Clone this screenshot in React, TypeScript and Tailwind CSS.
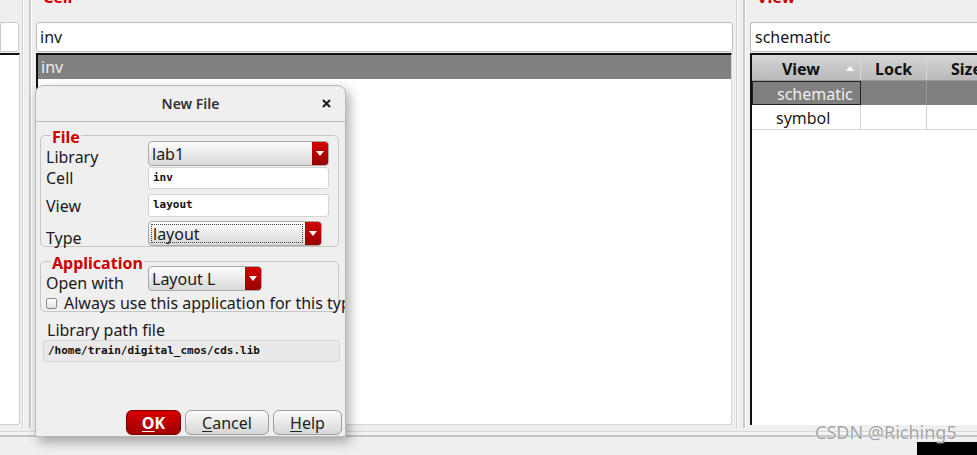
import React from 'react';

const Arrow = () => (
  <svg width="8" height="5" viewBox="0 0 8 5">
    <path d="M0 0h8L4 5z" fill="#fff" />
  </svg>
);

interface ComboProps {
  value: string;
  w: string;
  focus?: boolean;
}

const Combo: React.FC<ComboProps> = ({ value, w, focus }) => (
  <div className={`${w} h-[25px] flex rounded-[4px] border border-[#a9a9a9] bg-linear-to-b from-[#fdfdfd] to-[#d8d8d8] overflow-hidden`}>
    <div className="flex-1 flex items-center p-[2px]">
      <div className={`h-full w-full flex items-center pl-[1px] text-[16px] text-[#1a1a1a] ${focus ? 'border border-dotted border-[#444]' : ''}`}>
        {value}
      </div>
    </div>
    <div className="w-[16px] h-full bg-linear-to-b from-[#d40000] to-[#980000] flex items-center justify-center">
      <Arrow />
    </div>
  </div>
);

const Field = ({ value, h }: { value: string; h: string }) => (
  <div className={`${h} w-[181px] bg-white border border-[#d4d4d4] rounded-[3px] flex items-center pl-[4px] font-['DejaVu_Sans_Mono',monospace] font-bold text-[11px] text-[#111]`}>
    {value}
  </div>
);

const Splitter = () => (
  <div className="w-[15px] shrink-0 h-[428px] flex pl-[2px] gap-[5px]">
    <div className="w-[2px] h-full bg-[#cfcfcf] border-r border-white" />
    <div className="w-[3px] h-full bg-[#cbcbcb] border-r border-white" />
  </div>
);

const Legend = ({ text, mb }: { text: string; mb: string }) => (
  <div className={`-mt-[8px] ${mb} ml-[5px] h-[18px] w-fit px-[1px] bg-[#efefef] text-[16px] leading-[18px] font-bold text-[#cc0000]`}>
    {text}
  </div>
);

const Button = ({ first, rest, w, primary }: { first: string; rest: string; w: string; primary?: boolean }) => (
  <div
    className={`${w} h-[25px] rounded-[6px] flex items-center justify-center text-[16px] ${
      primary
        ? 'bg-linear-to-b from-[#d80000] to-[#a00000] border border-[#7a0000] text-white font-bold'
        : 'bg-linear-to-b from-[#fbfbfb] to-[#d6d6d6] border border-[#9c9c9c] text-[#222]'
    }`}
  >
    <span className="underline underline-offset-2">{first}</span>
    {rest}
  </div>
);

export default function App() {
  return (
    <div className="w-[977px] h-[455px] relative overflow-hidden bg-[#efefef] font-['Noto_Sans',sans-serif] text-[#1a1a1a]">
      <div className="flex h-[425px]">
        {/* library panel (mostly hidden) */}
        <div className="w-[20px] shrink-0 flex flex-col">
          <div className="h-[22px]" />
          <div className="h-[30px] w-[19px] bg-white border border-[#c8c8c8] rounded-r-[3px]" />
          <div className="mt-[1px] flex-1 bg-white border-t-2 border-t-[#111] border-r border-b border-[#d0d0d0] rounded-br-[3px]" />
        </div>
        <Splitter />
        {/* cell panel */}
        <div className="w-[699px] shrink-0 flex flex-col">
          <div className="h-[22px] pl-[8px]">
            <div className="-mt-[11px] text-[16px] leading-[16px] font-bold text-[#cc0000]">Cell</div>
          </div>
          <div className="h-[30px] mx-[1px] bg-white border border-[#bdbdbd] rounded-[3px] flex items-center pl-[3px] text-[16px]">inv</div>
          <div className="mt-[1px] ml-[1px] mr-[2px] flex-1 bg-white border-t-2 border-l-2 border-t-[#111] border-l-[#111] border-r border-b border-r-[#d6d6d6] border-b-[#d6d6d6] rounded-br-[3px]">
            <div className="h-[24px] bg-[#808080] flex items-center pl-[3px] text-[16px] text-[#eeeeee]">inv</div>
          </div>
        </div>
        <Splitter />
        {/* view panel */}
        <div className="flex-1 min-w-0 overflow-hidden flex flex-col">
          <div className="h-[22px] pl-[8px]">
            <div className="-mt-[11px] text-[16px] leading-[16px] font-bold text-[#cc0000]">View</div>
          </div>
          <div className="h-[30px] ml-[1px] bg-white border border-[#bdbdbd] border-r-0 rounded-l-[3px] flex items-center pl-[4px] text-[16px]">schematic</div>
          <div className="mt-[1px] ml-[1px] flex-1 bg-white border-t-2 border-l-2 border-[#111]">
            <div className="h-[26px] pt-[2px] flex bg-linear-to-b from-[#d6d6d6] to-[#b9b9b9] text-[16px] font-bold text-[#111] border-b border-[#9a9a9a]">
              <div className="w-[109px] shrink-0 flex items-center justify-center relative border-r border-[#d8d8d8]">
                <span className="pr-[10px]">View</span>
                <svg className="absolute right-[6px] top-[9px]" width="8" height="5" viewBox="0 0 8 5">
                  <path d="M4 0L8 5H0z" fill="#fff" />
                </svg>
              </div>
              <div className="w-[66px] shrink-0 flex items-center justify-center border-r border-[#d8d8d8]">Lock</div>
              <div className="flex-1 flex items-center pl-[24px] whitespace-nowrap">Size</div>
            </div>
            <div className="h-[24px] flex bg-[#808080] text-[16px] text-[#eeeeee]">
              <div className="w-[109px] shrink-0 flex items-center pl-[24px] pt-[1px] border border-[#222]">schematic</div>
              <div className="w-[66px] shrink-0 border-r border-[#9a9a9a]" />
              <div className="flex-1" />
            </div>
            <div className="h-[25px] flex text-[16px] border-b border-[#d2d2d2]">
              <div className="w-[109px] shrink-0 flex items-center pl-[24px] pt-[2px] border-r border-[#d2d2d2]">symbol</div>
              <div className="w-[66px] shrink-0 border-r border-[#d2d2d2]" />
              <div className="flex-1" />
            </div>
          </div>
        </div>
      </div>

      {/* bottom area */}
      <div className="h-[30px] flex flex-col">
        <div className="h-[6px]" />
        <div className="h-[1px] bg-[#d8d8d8]" />
        <div className="h-[3px] bg-[#f4f4f4]" />
        <div className="h-[2px] bg-[#c4c4c4]" />
        <div className="flex-1 flex justify-end items-end">
          <div className="w-[60px] h-[13px] bg-black" />
        </div>
      </div>

      {/* New File dialog */}
      <div className="absolute left-[35px] top-[85px] w-[311px] h-[352px] bg-[#efefef] border border-[#b8b8b8] rounded-t-[8px] shadow-[4px_5px_12px_rgba(0,0,0,0.32)] flex flex-col overflow-hidden">
        <div className="h-[36px] shrink-0 border-b border-[#bdbdbd] flex items-center justify-center relative">
          <span className="text-[14px] font-semibold text-[#333] -mt-[1px]">New File</span>
          <svg className="absolute right-[14px] top-[13px]" width="9" height="9" viewBox="0 0 9 9">
            <path d="M1 1l7 7M8 1l-7 7" stroke="#222" strokeWidth="2.2" />
          </svg>
        </div>

        {/* File group */}
        <div className="mt-[13px] ml-[4px] w-[299px] border border-[#c6c6c6] rounded-[5px] pl-[5px] flex flex-col">
          <Legend text="File" mb="-mb-[5px]" />
          <div className="h-[25px] flex items-end">
            <div className="w-[102px] leading-[20px] text-[16px] -mb-[1px]">Library</div>
            <Combo value="lab1" w="w-[181px]" />
          </div>
          <div className="h-[22px] mt-[1px] flex items-end">
            <div className="w-[102px] leading-[20px] text-[16px] mb-[1px]">Cell</div>
            <Field value="inv" h="h-[22px]" />
          </div>
          <div className="h-[23px] mt-[5px] flex items-end">
            <div className="w-[102px] leading-[20px] text-[16px] mb-[1px]">View</div>
            <Field value="layout" h="h-[23px]" />
          </div>
          <div className="h-[25px] mt-[4px] flex items-end">
            <div className="w-[102px] leading-[20px] text-[16px] -mb-[2px]">Type</div>
            <Combo value="layout" w="w-[174px]" focus />
          </div>
        </div>

        {/* Application group */}
        <div className="mt-[14px] ml-[4px] w-[299px] border border-[#c6c6c6] rounded-[5px] pl-[5px] flex flex-col">
          <Legend text="Application" mb="-mb-[6px]" />
          <div className="h-[25px] flex items-end">
            <div className="w-[102px] leading-[20px] text-[16px] -mb-[2px]">Open with</div>
            <Combo value="Layout L" w="w-[114px]" />
          </div>
          <div className="h-[16px] mt-[4px] flex items-center gap-[7px] whitespace-nowrap">
            <div className="w-[11px] h-[11px] shrink-0 rounded-[2px] border border-[#8a8a8a] bg-linear-to-b from-[#ffffff] to-[#e2e2e2]" />
            <span className="text-[16px] leading-[16px]">Always use this application for this type</span>
          </div>
        </div>

        <div className="mt-[8px] ml-[11px] leading-[20px] text-[16px]">Library path file</div>
        <div className="ml-[7px] w-[297px] h-[22px] bg-[#e9e9e9] border border-[#d6d6d6] rounded-[3px] flex items-center pl-[4px] font-['DejaVu_Sans_Mono',monospace] font-bold text-[11px] text-[#111]">
          /home/train/digital_cmos/cds.lib
        </div>

        <div className="mt-auto mb-[1px] pr-[3px] flex justify-end gap-[4px]">
          <Button first="O" rest="K" w="w-[55px]" primary />
          <Button first="C" rest="ancel" w="w-[84px]" />
          <Button first="H" rest="elp" w="w-[69px]" />
        </div>
      </div>

      {/* watermark */}
      <div className="absolute left-[815px] top-[423px] text-[18px] leading-[18px] text-[#a4a4a4] [text-shadow:0_0_2px_#fff,0_0_1px_#fff]">
        CSDN @Riching5
      </div>
    </div>
  );
}
